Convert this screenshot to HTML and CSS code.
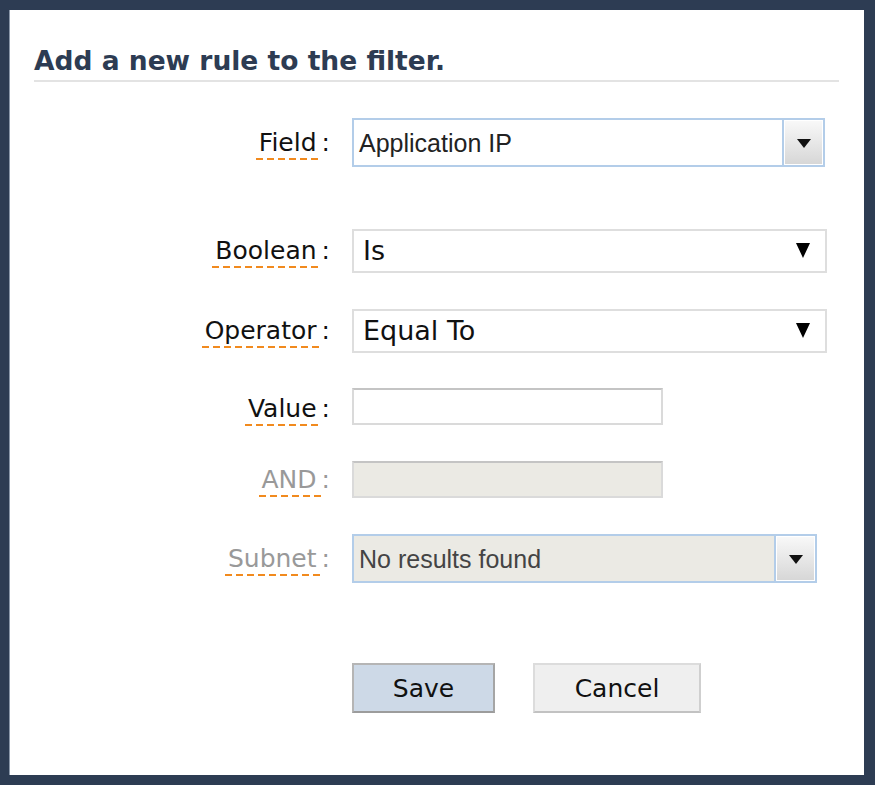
FILE: index.html
```html
<!DOCTYPE html>
<html lang="en">
<head>
    <meta charset="UTF-8">
    <meta name="viewport" content="width=device-width, initial-scale=1.0">
    <title>Add Filter Rule</title>
    <link rel="stylesheet" href="styles.css">
</head>
<body>

<div class="dialog">
    <h1 class="dialog-title">Add a new rule to the filter.</h1>

    <form class="rule-form">
        <div class="row row-field">
            <label class="label"><span class="term">Field</span>:</label>
            <div class="combo">
                <div class="combo-text">Application IP</div>
                <div class="combo-btn"><span class="arrow"></span></div>
            </div>
        </div>

        <div class="row row-boolean">
            <label class="label"><span class="term">Boolean</span>:</label>
            <div class="select">Is</div>
        </div>

        <div class="row row-operator">
            <label class="label"><span class="term">Operator</span>:</label>
            <div class="select">Equal To</div>
        </div>

        <div class="row row-value">
            <label class="label label-low"><span class="term">Value</span>:</label>
            <input type="text" class="text-input">
        </div>

        <div class="row row-and">
            <label class="label disabled"><span class="term">AND</span>:</label>
            <input type="text" class="text-input" disabled>
        </div>

        <div class="row row-subnet">
            <label class="label disabled"><span class="term">Subnet</span>:</label>
            <div class="combo combo-disabled">
                <div class="combo-text">No results found</div>
                <div class="combo-btn"><span class="arrow"></span></div>
            </div>
        </div>

        <div class="row row-buttons">
            <button type="button" class="btn btn-save">Save</button>
            <button type="button" class="btn btn-cancel">Cancel</button>
        </div>
    </form>
</div>

</body>
</html>
```

FILE: styles.css
```css
body {
    margin: 0;
    background-color: #2d3c53;
    font-family: "DejaVu Sans", Verdana, sans-serif;
}
.dialog {
    margin: 10px 11px 10px 9px;
    height: 765px;
    box-sizing: border-box;
    padding: 36px 25px 0 24px;
    background-color: #fff;
    border-left: 1px solid #8a97a9;
}
.dialog-title {
    margin: 0;
    padding-bottom: 4px;
    font-size: 26.5px;
    line-height: 30px;
    font-weight: bold;
    color: #2d3c53;
    border-bottom: 2px solid #e3e3e3;
}
.rule-form {
    margin: 0;
}
.row {
    display: flex;
    align-items: center;
}
.row-field { margin-top: 36px; }
.row-boolean { margin-top: 62px; }
.row-operator { margin-top: 36px; }
.row-value { margin-top: 35px; }
.row-and { margin-top: 36px; }
.row-subnet { margin-top: 36px; }
.row-buttons {
    margin-top: 80px;
    padding-left: 318px;
    gap: 38px;
}
.label {
    width: 296px;
    margin-right: 22px;
    text-align: right;
    font-size: 25px;
    line-height: 30px;
    color: #111;
}
.label-low {
    margin-top: 4px;
}
.label.disabled {
    color: #999;
}
.term {
    padding: 0 5px 3px 3px;
    background-image: repeating-linear-gradient(to right, #f18a1e 0 7px, transparent 7px 11px);
    background-size: 100% 2px;
    background-position: left bottom;
    background-repeat: no-repeat;
}
.combo {
    display: flex;
    height: 49px;
}
.combo-text {
    width: 432px;
    box-sizing: border-box;
    padding: 2px 0 0 5px;
    border: 2px solid #b3cde9;
    background-color: #fff;
    font-family: "Liberation Sans", Arial, sans-serif;
    font-size: 25px;
    line-height: 43px;
    color: #222;
}
.combo-btn {
    width: 41px;
    box-sizing: border-box;
    border: 2px solid #b3cde9;
    border-left: none;
    background: linear-gradient(#f9f9f9, #d6d6d6);
    box-shadow: inset 0 0 0 1px #fff;
    display: flex;
    align-items: center;
    justify-content: center;
}
.arrow {
    width: 0;
    height: 0;
    border-left: 7px solid transparent;
    border-right: 7px solid transparent;
    border-top: 9px solid #111;
    margin-top: 2px;
}
.combo-disabled .combo-text {
    width: 424px;
    background-color: #ebeae4;
    color: #444;
}
.select {
    position: relative;
    width: 475px;
    height: 44px;
    box-sizing: border-box;
    padding-left: 9px;
    border: 2px solid #dedede;
    background-color: #fff;
    font-size: 27px;
    line-height: 40px;
    color: #111;
}
.select::after {
    content: "";
    position: absolute;
    right: 15px;
    top: 12px;
    border-left: 7.5px solid transparent;
    border-right: 7.5px solid transparent;
    border-top: 15px solid #000;
}
.text-input {
    width: 311px;
    height: 37px;
    box-sizing: border-box;
    margin: 0;
    padding: 0 6px;
    border: 2px solid #dadada;
    border-top-color: #c4c4c4;
    background-color: #fff;
    font-family: "Liberation Sans", Arial, sans-serif;
    font-size: 20px;
    outline: none;
}
.text-input:disabled {
    background-color: #ebeae4;
}
.btn {
    height: 50px;
    box-sizing: border-box;
    margin: 0;
    font-family: "DejaVu Sans", Verdana, sans-serif;
    font-size: 25px;
    color: #111;
    cursor: pointer;
}
.btn-save {
    width: 143px;
    background-color: #cdd9e7;
    border: 2px solid #b5b5b5;
    border-bottom-color: #9c9c9c;
    border-right-color: #a5a5a5;
}
.btn-cancel {
    width: 168px;
    background-color: #efefef;
    border: 2px solid #dcdcdc;
    border-bottom-color: #c2c2c2;
    border-right-color: #cfcfcf;
}
```
